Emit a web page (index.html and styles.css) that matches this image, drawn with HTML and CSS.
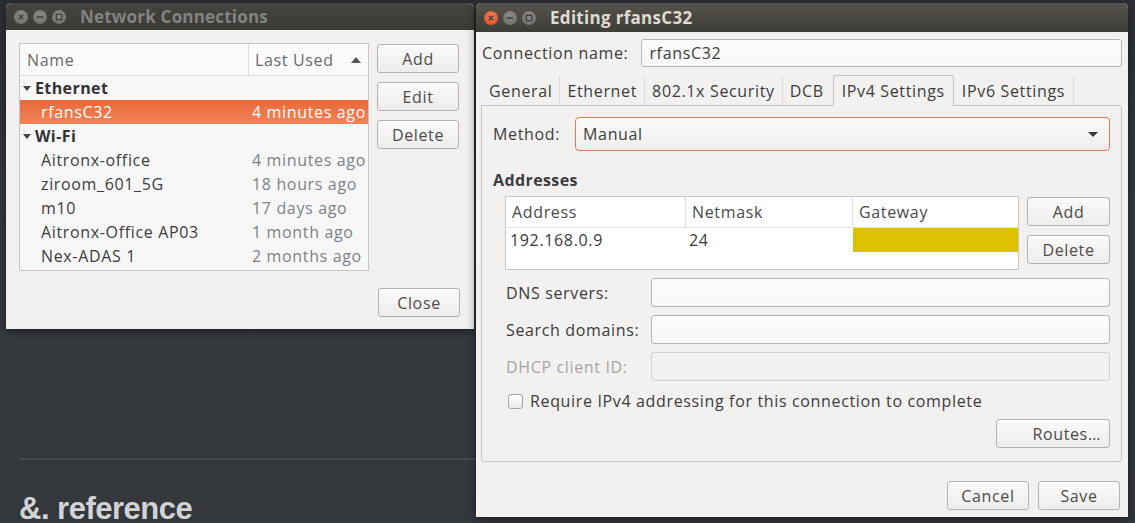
FILE: index.html
```html
<!DOCTYPE html>
<html>
<head>
<meta charset="utf-8">
<link rel="stylesheet" href="styles.css">
</head>
<body>
<div class="desktop">
  <div class="footer">
    <div class="rule"></div>
    <div class="ref">&amp;. reference</div>
  </div>

  <div class="win win-nc">
    <div class="titlebar">
      <div class="wbtns">
        <span class="wb close-i"><svg viewBox="0 0 14 14" width="14" height="14"><path d="M4.8 4.8l4.4 4.4M9.2 4.8l-4.4 4.4" stroke="#3c3b37" stroke-width="1.3"/></svg></span>
        <span class="wb"><svg viewBox="0 0 14 14" width="14" height="14"><path d="M3.8 7h6.4" stroke="#3c3b37" stroke-width="1.4"/></svg></span>
        <span class="wb"><svg viewBox="0 0 14 14" width="14" height="14"><rect x="4.3" y="4.3" width="5.4" height="5.4" fill="none" stroke="#3c3b37" stroke-width="1.2"/></svg></span>
      </div>
      <div class="title inactive">Network Connections</div>
    </div>
    <div class="nc-body">
      <div class="nc-main">
        <div class="list">
          <div class="list-head">
            <div class="lh-name">Name</div>
            <div class="lh-used">Last Used <svg class="sort" viewBox="0 0 10 6" width="10" height="6"><path d="M0 6L5 0L10 6Z" fill="#555"/></svg></div>
          </div>
          <div class="row group"><svg class="exp" viewBox="0 0 8 5" width="8" height="5"><path d="M0 0H8L4 5Z" fill="#444"/></svg>Ethernet</div>
          <div class="row item sel"><span class="n">rfansC32</span><span class="u">4 minutes ago</span></div>
          <div class="row group"><svg class="exp" viewBox="0 0 8 5" width="8" height="5"><path d="M0 0H8L4 5Z" fill="#444"/></svg>Wi-Fi</div>
          <div class="row item"><span class="n">Aitronx-office</span><span class="u">4 minutes ago</span></div>
          <div class="row item"><span class="n">ziroom_601_5G</span><span class="u">18 hours ago</span></div>
          <div class="row item"><span class="n">m10</span><span class="u">17 days ago</span></div>
          <div class="row item"><span class="n">Aitronx-Office AP03</span><span class="u">1 month ago</span></div>
          <div class="row item"><span class="n">Nex-ADAS 1</span><span class="u">2 months ago</span></div>
        </div>
        <div class="nc-btns">
          <button class="btn">Add</button>
          <button class="btn">Edit</button>
          <button class="btn">Delete</button>
        </div>
      </div>
      <div class="nc-foot"><button class="btn">Close</button></div>
    </div>
  </div>

  <div class="win win-ed">
    <div class="titlebar">
      <div class="wbtns">
        <span class="wb close-a"><svg viewBox="0 0 14 14" width="14" height="14"><path d="M4.8 4.8l4.4 4.4M9.2 4.8l-4.4 4.4" stroke="#3c3b37" stroke-width="1.3"/></svg></span>
        <span class="wb"><svg viewBox="0 0 14 14" width="14" height="14"><path d="M3.8 7h6.4" stroke="#3c3b37" stroke-width="1.4"/></svg></span>
        <span class="wb"><svg viewBox="0 0 14 14" width="14" height="14"><rect x="4.3" y="4.3" width="5.4" height="5.4" fill="none" stroke="#3c3b37" stroke-width="1.2"/></svg></span>
      </div>
      <div class="title active">Editing rfansC32</div>
    </div>
    <div class="ed-body">
      <div class="conn-row">
        <label class="lbl">Connection name:</label>
        <div class="entry conn-entry">rfansC32</div>
      </div>
      <div class="tabs">
        <div class="tab">General</div>
        <div class="tab">Ethernet</div>
        <div class="tab">802.1x Security</div>
        <div class="tab">DCB</div>
        <div class="tab on">IPv4 Settings</div>
        <div class="tab">IPv6 Settings</div>
      </div>
      <div class="page">
        <div class="method-row">
          <label class="lbl">Method:</label>
          <div class="combo"><span>Manual</span><span class="caret"></span></div>
        </div>
        <div class="section">Addresses</div>
        <div class="addr-row">
          <div class="addr-table">
            <div class="at-head">
              <div class="c1">Address</div>
              <div class="c2">Netmask</div>
              <div class="c3">Gateway</div>
            </div>
            <div class="at-row">
              <div class="c1">192.168.0.9</div>
              <div class="c2">24</div>
              <div class="c3 gw"></div>
            </div>
          </div>
          <div class="addr-btns">
            <button class="btn">Add</button>
            <button class="btn">Delete</button>
          </div>
        </div>
        <div class="form">
          <label class="lbl">DNS servers:</label><div class="entry"></div>
          <label class="lbl">Search domains:</label><div class="entry"></div>
          <label class="lbl dis">DHCP client ID:</label><div class="entry dis"></div>
        </div>
        <div class="check-row"><span class="cb"></span><span>Require IPv4 addressing for this connection to complete</span></div>
        <div class="routes-row"><button class="btn routes">Routes…</button></div>
      </div>
      <div class="ed-foot">
        <button class="btn">Cancel</button>
        <button class="btn">Save</button>
      </div>
    </div>
  </div>
</div>
</body>
</html>
```
FILE: styles.css
```css
* { box-sizing: border-box; }
html, body { margin: 0; padding: 0; }
body {
  width: 1135px; height: 523px; overflow: hidden;
  background: linear-gradient(180deg, #2c2f34 0%, #363a3f 40%, #34373c 100%);
  font-family: "Open Sans", "Noto Sans", sans-serif;
  font-size: 16px;
  letter-spacing: 0.65px;
  color: #3c3c3c;
}
.desktop { position: relative; width: 1135px; height: 523px; }

.footer { position: absolute; left: 19px; top: 458px; width: 470px; }
.rule { height: 2px; background: #45484d; }
.ref {
  margin-top: 37px;
  font-family: "Liberation Sans", Arial, sans-serif;
  font-weight: bold; font-size: 31px; line-height: 24px; color: #d2d3d5;
  letter-spacing: -0.5px;
}

.win { position: absolute; background: #f2f1f0; box-shadow: 0 2px 10px rgba(0,0,0,.5); border-radius: 5px 5px 0 0; overflow: hidden; }
.win-nc { left: 6px; top: 3px; width: 468px; height: 326px; }
.win-ed { left: 476px; top: 3px; width: 652px; height: 514px; }

.titlebar {
  height: 27px; display: flex; align-items: center;
  background: linear-gradient(180deg, #45443f 0%, #3b3a36 100%);
  padding-left: 8px;
}
.win-ed .titlebar { height: 29px; background: linear-gradient(180deg, #57534c 0%, #3d3c37 100%); }
.wbtns { display: flex; gap: 5px; }
.wb {
  width: 14px; height: 14px; border-radius: 50%;
  background: radial-gradient(circle at 50% 35%, #8a8985, #6d6c68);
  display: inline-flex;
}
.close-a { background: radial-gradient(circle at 50% 35%, #f0805a, #df4a1a); }
.title { font-weight: bold; font-size: 17px; letter-spacing: 0.2px; margin-left: 14px; }
.title.inactive { color: #838380; }
.title.active { color: #dfdbd2; letter-spacing: 0.3px; }

.btn {
  font-family: inherit; font-size: 16px; letter-spacing: inherit; color: #4c4c4c;
  background: linear-gradient(180deg, #fafaf9 0%, #eeedeb 100%);
  border: 1px solid #b6b3ae; border-radius: 3px;
  height: 29px; padding: 0; cursor: default;
  box-shadow: 0 1px 0 rgba(255,255,255,.6) inset;
}

/* Network connections */
.nc-body { padding: 13px 14px 12px 13px; height: 299px; display: flex; flex-direction: column; }
.nc-main { display: flex; gap: 8px; }
.list { width: 350px; height: 228px; background: #f7f7f7; border: 1px solid #c7c5c1; overflow: hidden; }
.list-head { display: flex; height: 32px; border-bottom: 1px solid #dddbd8; background: #fbfbfb; align-items: stretch; }
.lh-name { width: 229px; padding-left: 7px; display: flex; align-items: center; color: #6a6a6a; border-right: 1px solid #dddbd8; }
.lh-used { flex: 1; padding-left: 6px; display: flex; align-items: center; color: #6a6a6a; white-space: nowrap; }
.sort { margin-left: 17px; }
.row { height: 24px; display: flex; align-items: center; white-space: nowrap; }
.row.group { font-weight: bold; color: #333; padding-left: 2px; letter-spacing: 0.4px; }
.exp { margin: 0 4px 0 1px; flex: none; }
.row.item .n { width: 232px; padding-left: 21px; color: #3c3c3c; }
.row.item .u { color: #7c8288; }
.row.sel { background: linear-gradient(180deg, #e9683a 0%, #f28558 100%); }
.row.sel .n, .row.sel .u { color: #fff; }
.nc-btns { display: flex; flex-direction: column; gap: 9px; padding-top: 1px; }
.nc-btns .btn { width: 82px; }
.nc-foot { display: flex; justify-content: flex-end; margin-top: 17px; }
.nc-foot .btn { width: 82px; height: 29px; }

/* Editor */
.ed-body { padding: 7px 6px 0 5px; }
.lbl { color: #3c3c3c; white-space: nowrap; }
.lbl.dis { color: #a6a6a4; }
.conn-row { display: flex; align-items: center; height: 27px; gap: 13px; padding-left: 1px; }
.entry {
  height: 29px; background: linear-gradient(180deg, #fbfbfb, #f7f7f7);
  border: 1px solid #b9b6b1; border-radius: 3px; padding-left: 7px;
  display: flex; align-items: center; color: #3c3c3c;
}
.entry.dis { background: #f2f1f0; border-color: #d2d0cc; }
.conn-entry { flex: 1; height: 28px; }

.tabs { display: flex; margin-top: 9px; height: 30px; align-items: flex-end; padding-left: 1px; }
.tab { height: 29px; padding: 0 7px; display: flex; align-items: center; border-right: 1px solid #dcdad6; color: #3c3c3c; white-space: nowrap; }
.tab:nth-child(4) { border-right: none; padding-right: 9px; }
.tab.on { height: 31px; padding: 0 8px; border: 1px solid #c9c6c1; border-bottom: none; border-radius: 3px 3px 0 0; background: #f2f1f0; margin-bottom: -1px; position: relative; z-index: 1; }
.tab:last-child { padding: 0 8px; }
.page { border: 1px solid #c9c6c1; border-radius: 0 3px 3px 3px; height: 357px; padding: 11px 11px 0 11px; }
.method-row { display: flex; align-items: center; gap: 15px; }
.combo {
  flex: 1; height: 34px; border: 1px solid #e07a55; border-radius: 4px;
  background: linear-gradient(180deg, #fbfbfa, #efeeec);
  display: flex; align-items: center; justify-content: space-between; padding: 0 11px 0 7px;
}
.caret { width: 0; height: 0; border-left: 5px solid transparent; border-right: 5px solid transparent; border-top: 5px solid #3c3c3c; }
.section { font-weight: bold; margin-top: 18px; color: #3c3c3c; letter-spacing: 0.4px; }
.addr-row { display: flex; gap: 8px; margin-top: 5px; padding-left: 12px; }
.addr-table { width: 515px; height: 74px; background: #fff; border: 1px solid #c9c6c1; }
.at-head { display: flex; height: 31px; border-bottom: 1px solid #e4e2df; }
.at-head > div { display: flex; align-items: center; padding-left: 6px; color: #4a4a4a; }
.c1 { width: 180px; } .c2 { width: 167px; } .c3 { flex: 1; }
.at-head .c1, .at-head .c2 { border-right: 1px solid #e4e2df; }
.at-row { display: flex; height: 24px; }
.at-row > div { display: flex; align-items: center; padding-left: 4px; color: #3a3a3a; }
.at-row .c2 { padding-left: 3px; }
.gw { background: #dcc200; }
.addr-btns { display: flex; flex-direction: column; gap: 9px; padding-top: 1px; }
.addr-btns .btn { width: 83px; height: 29px; }

.form { display: grid; grid-template-columns: 145px 1fr; row-gap: 8px; margin-top: 8px; padding-left: 13px; align-items: center; }
.form .entry { height: 29px; }
.check-row { display: flex; align-items: center; gap: 7px; margin-top: 9px; padding-left: 15px; color: #3c3c3c; }
.cb { width: 15px; height: 15px; border: 1px solid #a9a6a1; border-radius: 3px; background: linear-gradient(180deg, #fff, #ecebe9); flex: none; }
.routes-row { display: flex; justify-content: flex-end; margin-top: 7px; }
.routes { width: 114px; text-align: right; padding-right: 8px; }
.ed-foot { display: flex; justify-content: flex-end; gap: 9px; margin-top: 19px; padding-right: 2px; }
.ed-foot .btn { width: 82px; height: 29px; }
```
